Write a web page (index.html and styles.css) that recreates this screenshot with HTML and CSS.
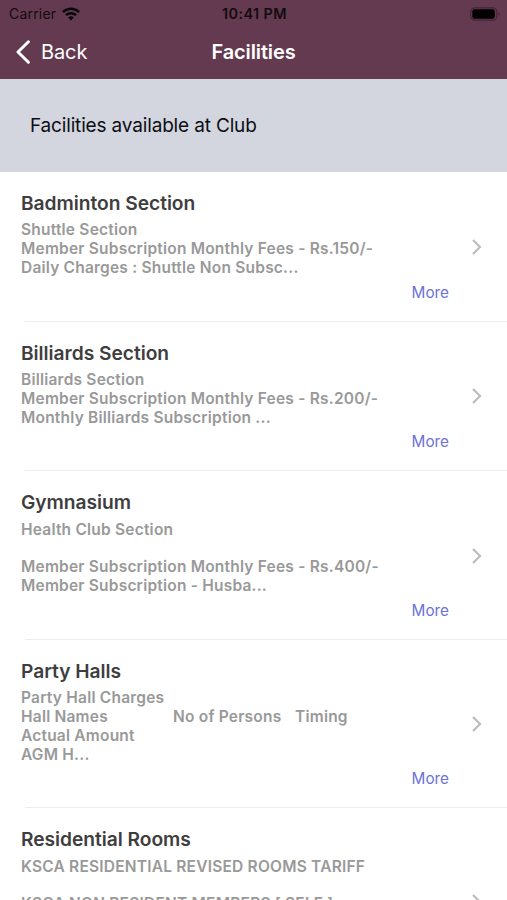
FILE: index.html
```html
<!DOCTYPE html>
<html lang="en">
<head>
<meta charset="utf-8">
<title>Facilities</title>
<link rel="stylesheet" href="styles.css">
</head>
<body>
<header class="header">
  <div class="status">
    <div class="carrier"><span>Carrier</span>
      <svg class="wifi" width="18" height="14" viewBox="0 0 18 14"><g fill="none" stroke="#08050a" stroke-width="2.5"><path d="M1 5.1a11.4 11.4 0 0 1 16 0"/><path d="M4 8.2a7.1 7.1 0 0 1 10 0"/></g><path fill="#08050a" d="M9 13.5 6.2 10.6a4 4 0 0 1 5.6 0z"/></svg>
    </div>
    <span class="clock">10:41 PM</span>
    <svg class="battery" width="31" height="14" viewBox="0 0 31 14"><rect x=".8" y=".8" width="26" height="12.4" rx="3.8" fill="none" stroke="#452438" stroke-width="1.2"/><rect x="2.3" y="2.3" width="22.5" height="9.4" rx="2.2" fill="#000"/><path d="M28.5 5.2q2.6 1.8 0 3.6z" fill="#452438"/></svg>
  </div>
  <nav class="nav">
    <div class="back">
      <svg width="16" height="24" viewBox="0 0 16 24"><path d="M13.4 1.8 3 12l10.4 10.2" fill="none" stroke="#fff" stroke-width="3" stroke-linecap="round" stroke-linejoin="round"/></svg>
      <span>Back</span>
    </div>
    <h1 class="title">Facilities</h1>
  </nav>
</header>
<div class="banner"><span>Facilities available at Club</span></div>
<main class="list">
  <article class="item">
    <div class="content"><h2><span>Badminton Section</span></h2>
<p><span>Shuttle Section</span><br><span>Member Subscription Monthly Fees - Rs.150/-</span><br><span>Daily Charges : Shuttle Non Subsc...</span></p>
    <a class="more">More</a></div>
    <svg class="chevron" width="12" height="18" viewBox="0 0 12 18"><path d="m2 2 7 7-7 7"/></svg>
  </article>
  <article class="item">
    <div class="content"><h2><span>Billiards Section</span></h2>
<p><span>Billiards Section</span><br><span>Member Subscription Monthly Fees - Rs.200/-</span><br><span>Monthly Billiards Subscription ...</span></p>
    <a class="more">More</a></div>
    <svg class="chevron" width="12" height="18" viewBox="0 0 12 18"><path d="m2 2 7 7-7 7"/></svg>
  </article>
  <article class="item">
    <div class="content"><h2><span>Gymnasium</span></h2>
<p><span>Health Club Section</span><br><br><span>Member Subscription Monthly Fees - Rs.400/-</span><br><span>Member Subscription - Husba...</span></p>
    <a class="more">More</a></div>
    <svg class="chevron" width="12" height="18" viewBox="0 0 12 18"><path d="m2 2 7 7-7 7"/></svg>
  </article>
  <article class="item">
    <div class="content"><h2><span>Party Halls</span></h2>
<p><span>Party Hall Charges</span><br><span class="columns"><span>Hall Names</span><span>No of Persons</span><span>Timing</span></span><span>Actual Amount</span><br><span>AGM H...</span></p>
    <a class="more">More</a></div>
    <svg class="chevron" width="12" height="18" viewBox="0 0 12 18"><path d="m2 2 7 7-7 7"/></svg>
  </article>
  <article class="item item-tall">
    <div class="content"><h2><span>Residential Rooms</span></h2>
<p><span>KSCA RESIDENTIAL REVISED ROOMS TARIFF</span><br><br><span>KSCA NON RESIDENT MEMBERS [ SELF ]</span></p></div>
    <svg class="chevron" width="12" height="18" viewBox="0 0 12 18"><path d="m2 2 7 7-7 7"/></svg>
  </article>
</main>
</body>
</html>
```
FILE: styles.css
```css
* { box-sizing: border-box; }
body {
  margin: 0;
  height: 900px;
  overflow: hidden;
  display: flex;
  flex-direction: column;
  background: #fff;
  font-family: Inter, "Liberation Sans", sans-serif;
}
h1, h2, p { margin: 0; }
svg { display: block; flex: none; }
.header { height: 79px; flex: none; background: #633a4f; }
.status {
  height: 27px;
  padding: 0 6px 0 9px;
  display: grid;
  grid-template-columns: 1fr auto 1fr;
  align-items: center;
  color: #140b10;
  font-size: 14px;
}
.carrier { display: flex; align-items: center; gap: 6px; letter-spacing: .2px; }
.clock { margin-right: 1px; font-size: 14.4px; font-weight: 600; letter-spacing: .45px; }
.battery { justify-self: end; }
.nav {
  height: 50px;
  padding: 0 15px;
  display: grid;
  grid-template-columns: 1fr auto 1fr;
  align-items: center;
  color: #fff;
  font-size: 20px;
}
.back { display: flex; align-items: center; gap: 10px; letter-spacing: -.1px; }
.title { font-size: 20px; font-weight: 600; letter-spacing: -.12px; }
.banner {
  height: 93px;
  flex: none;
  padding: 34px 30px 0;
  background: #d3d6df;
  color: #0c0d12;
  font-size: 19px;
  letter-spacing: -.16px;
  line-height: 26px;
}
.list { flex: 1; min-height: 0; overflow: hidden; }
.item {
  display: flex;
  align-items: center;
  justify-content: space-between;
  padding: 19.2px 24px 19px 21px;
  background: linear-gradient(#ededee, #ededee) 25px 100% / 100% 1px no-repeat;
}
.content { width: 428px; display: flex; flex-direction: column; }
.item h2 { color: #3e3e3e; font-size: 19.2px; font-weight: 600; letter-spacing: -.03px; line-height: 24px; }
.item p {
  margin-top: 6.2px;
  color: #999;
  font-size: 15.5px;
  font-weight: 600;
  letter-spacing: .21px;
  line-height: 18.9px;
  white-space: nowrap;
}
.columns { display: grid; grid-template-columns: 152px 122px 1fr; }
.more { align-self: flex-end; margin-top: 4.5px; color: #6d72d8; font-size: 15.3px; line-height: 20px; }
.chevron { fill: none; stroke: #bdbdc0; stroke-width: 2.2; }
.item-tall { height: 187px; align-items: center; }
.item-tall .content { align-self: flex-start; }
```
